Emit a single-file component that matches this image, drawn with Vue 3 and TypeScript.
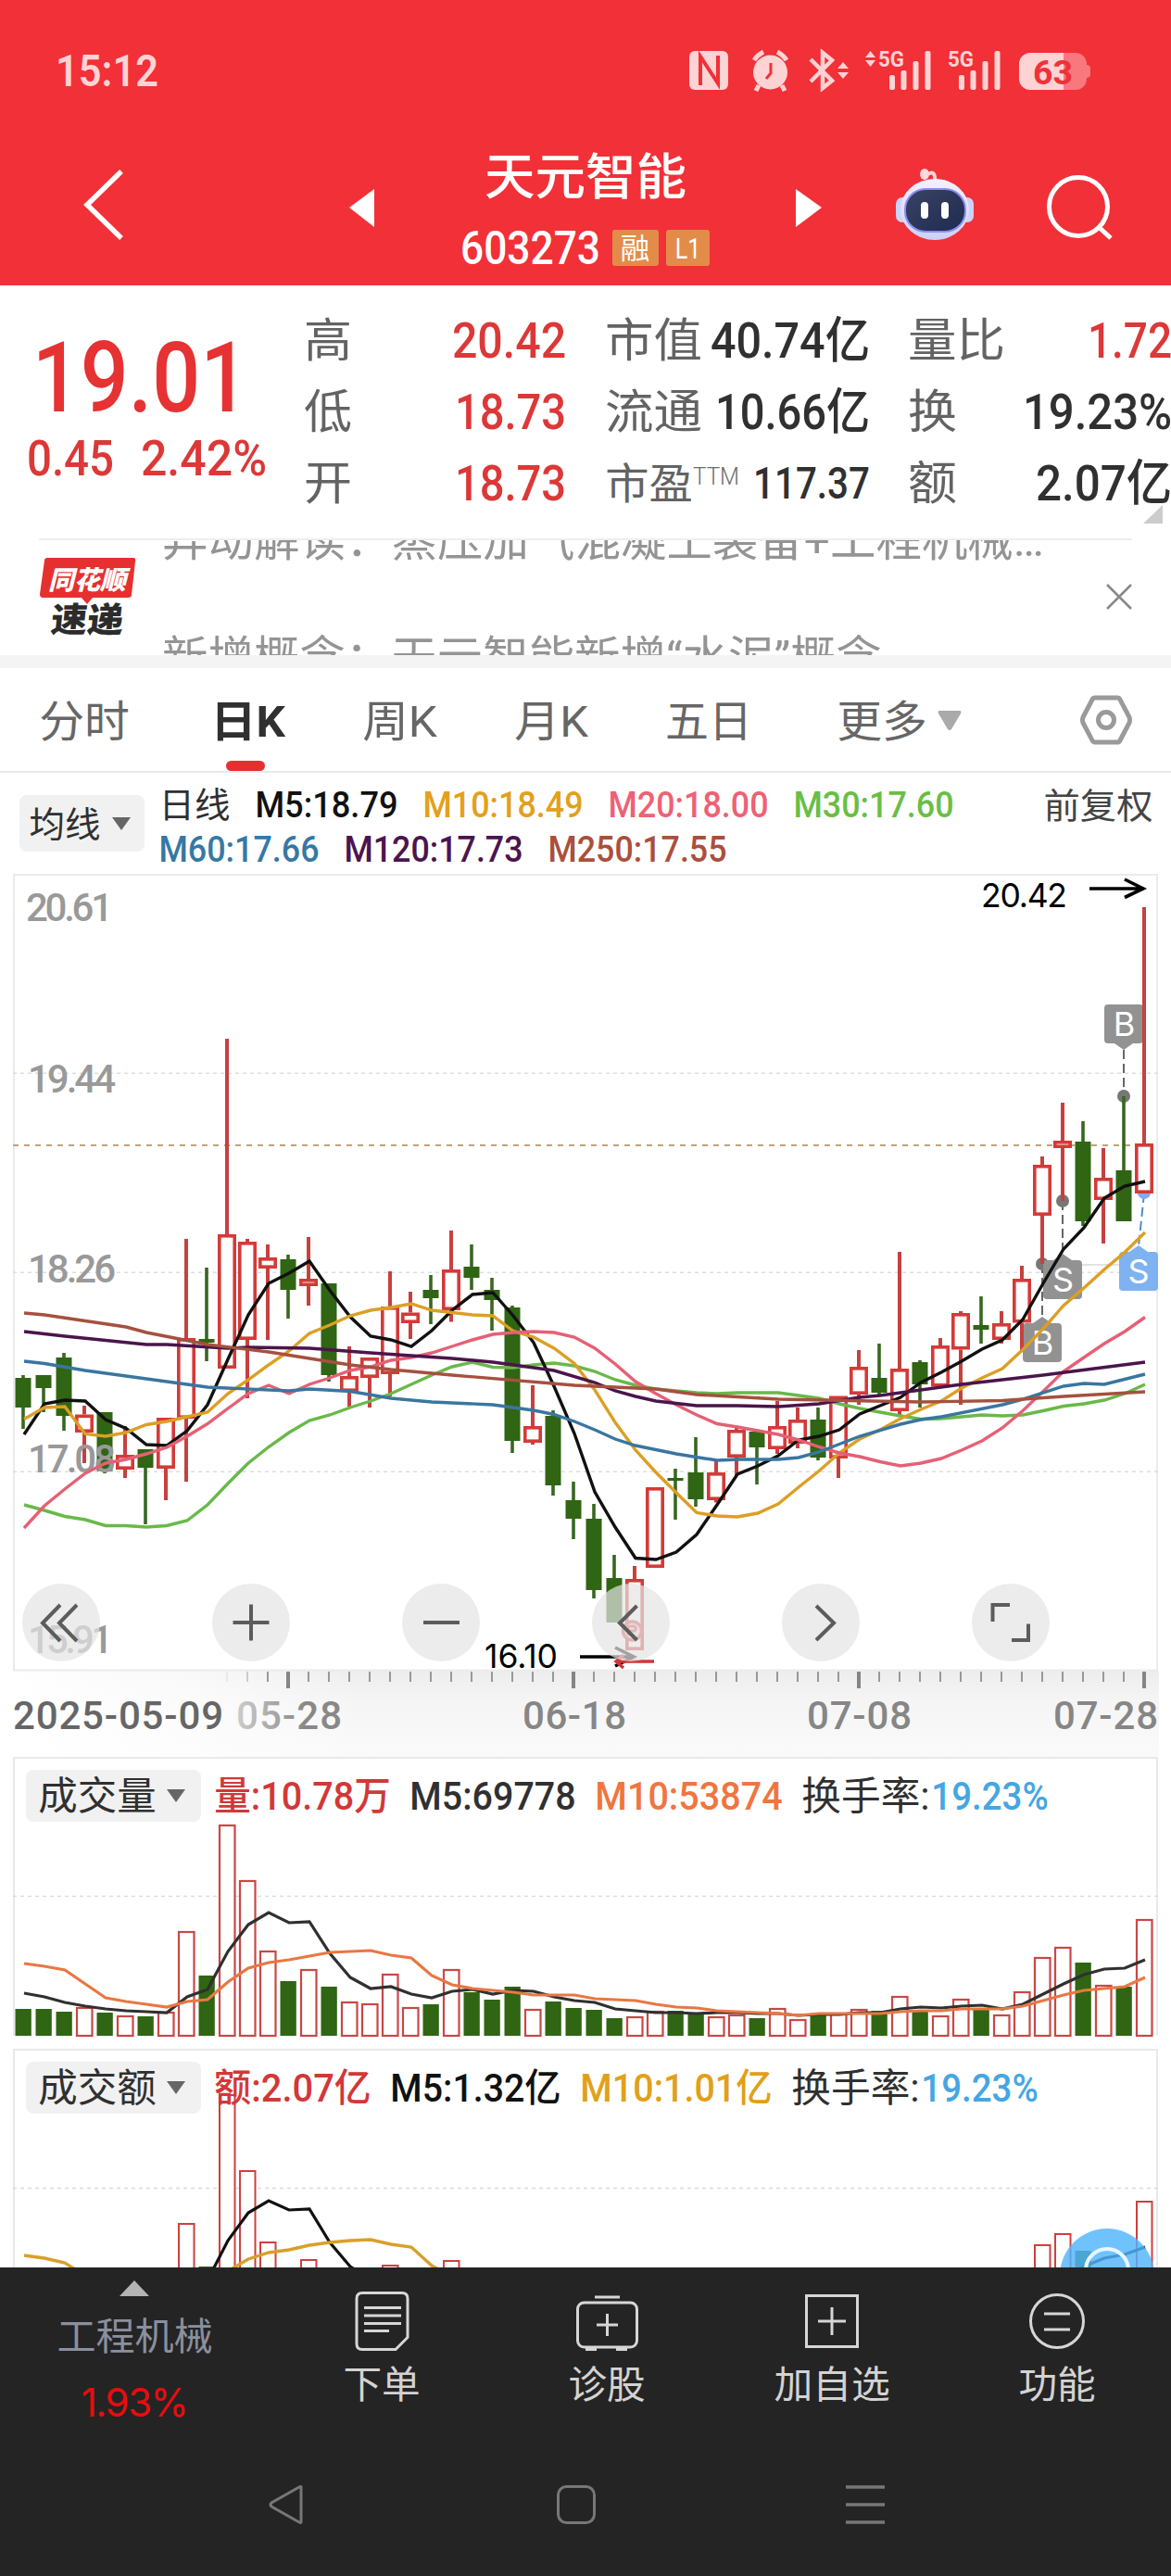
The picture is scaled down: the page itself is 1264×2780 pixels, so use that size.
<script setup lang="ts">
import { h } from 'vue'

const FONT = "Roboto, 'Noto Sans CJK SC', sans-serif"

interface FitProps {
  t: string
  w: number
  s: number
  c?: string
  b?: number
}

// One line of text condensed or widened to an exact ink width.
const Fit = (p: FitProps) =>
  h('svg', { width: p.w, height: p.s, style: 'overflow:visible;display:block;flex:none' }, [
    h(
      'text',
      {
        x: -p.s * 0.04,
        y: p.s * 0.86,
        'font-size': p.s,
        'font-family': FONT,
        'font-weight': p.b ?? 400,
        fill: p.c ?? '#333',
        textLength: p.w + p.s * 0.08,
        lengthAdjust: 'spacingAndGlyphs',
      },
      p.t,
    ),
  ])
Fit.props = ['t', 'w', 's', 'c', 'b']

interface Stat { label: string; lw: number; value: string; vw: number; up?: boolean; ttm?: boolean }
const stats: Stat[][] = [
  [
    { label: '高', lw: 48, value: '20.42', vw: 119, up: true },
    { label: '低', lw: 48, value: '18.73', vw: 116, up: true },
    { label: '开', lw: 48, value: '18.73', vw: 116, up: true },
  ],
  [
    { label: '市值', lw: 101, value: '40.74亿', vw: 168 },
    { label: '流通', lw: 101, value: '10.66亿', vw: 163 },
    { label: '市盈', lw: 91, value: '117.37', vw: 122, ttm: true },
  ],
  [
    { label: '量比', lw: 101, value: '1.72', vw: 87, up: true },
    { label: '换', lw: 49, value: '19.23%', vw: 157 },
    { label: '额', lw: 49, value: '2.07亿', vw: 143 },
  ],
]

const legend1 = [
  { t: 'M5:18.79', w: 151, c: '#111111' },
  { t: 'M10:18.49', w: 170, c: '#e3a01c' },
  { t: 'M20:18.00', w: 170, c: '#ee6175' },
  { t: 'M30:17.60', w: 170, c: '#69be45' },
]
const legend2 = [
  { t: 'M60:17.66', w: 170, c: '#3578a6' },
  { t: 'M120:17.73', w: 190, c: '#4c144f' },
  { t: 'M250:17.55', w: 190, c: '#ab4f3c' },
]

// direction, high, body top, body bottom, low
type Candle = [string, number, number, number, number]
const candles: Candle[] = [
  ['G', 1485, 1488, 1520, 1543], ['G', 1485, 1485, 1499, 1525], ['G', 1461, 1466, 1529, 1545],
  ['R', 1518, 1527.5, 1547, 1580], ['G', 1525, 1525, 1588.5, 1591], ['R', 1540, 1571, 1587, 1596],
  ['G', 1565, 1565, 1585, 1646], ['R', 1531, 1531, 1586, 1620], ['R', 1338, 1445, 1532, 1600],
  ['G', 1369, 1446, 1450, 1470], ['R', 1122, 1333, 1478, 1478], ['R', 1338, 1341, 1447, 1510],
  ['R', 1344, 1358, 1370, 1447], ['G', 1355, 1360, 1393, 1424], ['R', 1336, 1381, 1389, 1410],
  ['G', 1386, 1386, 1485, 1492], ['R', 1454, 1486, 1503, 1519], ['R', 1466, 1466, 1488, 1520],
  ['R', 1373, 1411, 1484, 1508], ['R', 1395, 1417.5, 1429, 1446], ['G', 1377, 1393, 1402, 1430],
  ['R', 1329, 1371, 1415, 1427.5], ['G', 1344, 1368, 1380, 1393], ['G', 1380, 1393, 1404, 1437],
  ['G', 1410, 1412, 1556, 1569], ['R', 1496, 1540, 1558, 1560], ['G', 1523, 1529, 1604, 1615],
  ['G', 1600, 1620, 1640, 1662], ['G', 1624, 1640, 1717, 1726], ['G', 1679, 1704, 1752, 1752],
  ['R', 1691, 1705, 1782, 1782], ['R', 1606, 1606, 1693, 1693], ['G', 1586, 1596, 1599, 1641],
  ['G', 1552, 1590, 1619, 1627], ['R', 1577, 1590, 1620, 1622.5], ['R', 1542, 1544, 1574, 1593],
  ['G', 1546, 1546, 1563, 1603], ['R', 1513, 1540, 1565, 1570], ['R', 1520, 1533, 1559, 1564],
  ['G', 1520, 1533, 1574, 1577], ['R', 1507.5, 1507.5, 1575, 1596], ['R', 1458, 1476, 1506, 1517],
  ['G', 1451, 1488, 1504, 1506], ['R', 1352, 1478, 1524, 1528], ['G', 1469, 1471, 1495, 1520],
  ['R', 1445, 1453, 1497.5, 1497.5], ['R', 1416, 1418, 1457.5, 1517], ['G', 1400, 1431, 1436, 1451],
  ['R', 1416, 1429, 1447, 1451], ['R', 1367, 1381, 1428.5, 1458.5], ['R', 1249, 1258, 1313, 1365],
  ['R', 1191, 1232, 1240, 1297], ['G', 1211, 1233, 1319, 1324], ['R', 1240, 1272, 1296, 1343],
  ['G', 1184, 1264, 1319, 1319], ['R', 980, 1235, 1289, 1289],
]
const cx = (i: number) => 25 + 22 * i

const full = (ys: number[]) => ys.map((y, i) => `${cx(i) + 1},${y}`).join(' ')
const sparse = (ps: [number, number][]) => ps.map(([i, y]) => `${cx(i) + 1},${y}`).join(' ')

const maLines = [
  { c: '#69b94a', p: full([1625, 1631, 1637.5, 1641, 1647.5, 1647.5, 1649, 1647.5, 1642, 1625, 1602, 1580, 1562.5, 1547, 1534, 1528, 1520, 1513, 1505, 1495, 1485, 1476, 1471, 1476.5, 1477, 1474, 1472, 1475, 1481, 1490, 1496, 1500, 1502, 1504, 1505, 1504, 1504, 1504, 1507, 1510, 1516, 1521, 1525, 1529, 1532.5, 1532, 1530, 1528, 1529, 1528, 1523.5, 1518.5, 1516, 1512, 1505, 1495]) },
  { c: '#111111', p: full([1549, 1516, 1512, 1513, 1533, 1542.5, 1560, 1561, 1545, 1517, 1468, 1420, 1386, 1375, 1362, 1393.5, 1422, 1443, 1447, 1454, 1437, 1415, 1398, 1396, 1421, 1450, 1497, 1548, 1611, 1649, 1682.5, 1684, 1676, 1657, 1625, 1592, 1583, 1572, 1555, 1551, 1544, 1527, 1518, 1509, 1493, 1482, 1470, 1457, 1447, 1425, 1386, 1349, 1326, 1294, 1281, 1276]) },
  { c: '#dc9f25', p: full([1532.5, 1520, 1519, 1548.5, 1551, 1547, 1538.5, 1535, 1530, 1525, 1505, 1490, 1474, 1459, 1440, 1431, 1421, 1415, 1412, 1408, 1415, 1417.5, 1420, 1421, 1437.5, 1444, 1456, 1472.5, 1501, 1536, 1566, 1590, 1612, 1633.5, 1637, 1638, 1634, 1624, 1606, 1588.5, 1569, 1554, 1544, 1532, 1522, 1513, 1499, 1488, 1478, 1457.5, 1435, 1410, 1391, 1371, 1352.5, 1331]) },
  { c: '#e66075', p: full([1650, 1626, 1608, 1591, 1580, 1576, 1570, 1563, 1551, 1537.5, 1521, 1505, 1496, 1505, 1495, 1488, 1480, 1476, 1469, 1466, 1461, 1454, 1447, 1441, 1439, 1438, 1439, 1444, 1456, 1473, 1492, 1505, 1517, 1528, 1537.5, 1541, 1545, 1549, 1555, 1562.5, 1569, 1573, 1578.5, 1583, 1580, 1575, 1566, 1556, 1542, 1523.5, 1502.5, 1481, 1466, 1451, 1438, 1422.5]) },
  { c: '#3976a0', p: sparse([[0, 1470], [1, 1472.5], [3, 1480], [5, 1486], [6, 1489], [8, 1495], [9, 1498], [13, 1502], [14, 1500], [16, 1502.5], [18, 1510], [20, 1514], [23, 1517], [25, 1523], [26, 1527.5], [27, 1535], [28, 1544], [29, 1554], [30, 1561], [32, 1570], [34, 1577], [35, 1576], [37, 1576], [38, 1574], [39, 1568], [41, 1551], [43, 1538], [44, 1533], [45, 1530], [48, 1517], [49, 1511], [51, 1497], [52, 1494], [53, 1495], [55, 1484]]) },
  { c: '#4a154b', p: sparse([[0, 1438], [2, 1443], [6, 1452], [7, 1452], [10, 1456], [11, 1455], [14, 1456], [17, 1461], [21, 1467], [23, 1471], [26, 1480], [28, 1493], [29, 1502], [30, 1508], [31, 1513], [33, 1518], [35, 1518], [37, 1519], [39, 1516], [41, 1509], [42, 1507], [46, 1495], [50, 1485], [55, 1471]]) },
  { c: '#a6503f', p: sparse([[0, 1418], [1, 1420], [5, 1433], [6, 1439], [9, 1452], [12, 1460], [16, 1474], [18, 1479], [21, 1485], [27, 1496], [31, 1500], [33, 1506], [37, 1511], [44, 1514], [48, 1512.5], [51, 1508], [55, 1503]]) },
]

const axisLabels = [
  { t: '20.61', x: 28, y: 995, w: 94 },
  { t: '19.44', x: 30, y: 1180, w: 95 },
  { t: '18.26', x: 30, y: 1385, w: 95 },
  { t: '17.08', x: 30, y: 1590, w: 95 },
  { t: '15.91', x: 30, y: 1785, w: 92 },
]

const ticks = Array.from({ length: 46 }, (_, k) => {
  const i = k + 10
  return { x: cx(i), major: i % 14 === 13, o: i === 10 ? 0.15 : i === 11 ? 0.45 : 1 }
})

const volTops = [2168, 2168, 2171, 2166, 2172, 2175, 2176, 2171, 2084, 2132, 1969, 2029, 2105, 2138, 2125, 2144, 2160, 2162, 2130, 2166, 2163, 2125, 2150, 2158, 2144, 2168, 2160, 2167, 2169, 2178, 2176, 2170, 2170, 2172, 2176, 2174, 2178, 2167, 2179, 2175, 2173, 2168, 2170, 2154, 2170, 2175, 2157, 2168, 2174, 2149, 2112, 2101, 2118, 2142, 2144, 2071]
const volM5 = full([2151, 2155, 2161, 2165, 2168, 2170, 2171, 2172, 2155, 2147, 2106, 2077, 2064, 2075, 2074, 2108, 2134, 2146, 2144, 2152, 2156, 2149, 2147, 2152, 2148, 2149, 2155, 2159, 2161, 2168, 2170, 2172, 2172, 2173, 2172, 2172, 2173, 2173, 2175, 2174, 2174, 2172, 2172, 2168, 2166, 2167, 2165, 2164, 2168, 2163, 2152, 2141, 2131, 2125, 2124, 2115])
const volM10 = full([2119, 2122, 2126, 2141, 2156, 2160, 2163, 2166, 2160, 2158, 2139, 2124, 2118, 2115, 2111, 2107, 2106, 2105, 2110, 2113, 2132, 2142, 2146, 2148, 2150, 2153, 2153, 2153, 2157, 2158, 2159, 2163, 2166, 2167, 2170, 2171, 2172, 2173, 2175, 2173, 2173, 2173, 2173, 2171, 2170, 2170, 2168, 2168, 2168, 2165, 2159, 2153, 2148, 2146, 2144, 2134])

const amtTops: [number, number][] = [[8, 2399], [9, 2446], [10, 2260], [11, 2342], [12, 2419], [14, 2438], [18, 2444], [21, 2439], [50, 2422], [51, 2410], [52, 2429], [55, 2375]]
const amtM5 = [
  sparse([[9, 2461], [10, 2418], [11, 2388], [12, 2375], [13, 2385], [14, 2384], [15, 2420], [16, 2446], [17, 2460]]),
  sparse([[51, 2456], [52, 2446], [53, 2437], [54, 2433], [55, 2425]]),
]
const amtM10 = [
  sparse([[0, 2434], [1, 2437], [2, 2442], [3, 2456]]),
  sparse([[10, 2451], [11, 2438], [12, 2431], [13, 2428], [14, 2423], [15, 2420], [16, 2418], [17, 2417], [18, 2422], [19, 2425], [20, 2445], [21, 2457]]),
]
const isRed = (i: number) => candles[i][0] === 'R'
</script>

<template>
  <div class="page">
    <div class="status">
      <Fit t="15:12" :w="107" :s="48" c="#fdd3d4" :b="600" />
      <svg class="status-icons" width="440" height="60" viewBox="740 46 440 60">
        <g fill="#fdd3d4">
          <rect x="744" y="55" width="42" height="42" rx="6" />
          <path d="M756 92V61l19 29V60" fill="none" stroke="#f13037" stroke-width="4" />
          <circle cx="831.500" cy="78" r="18.500" />
          <path d="M814 65a26 26 0 0 1 10-9M849 65a26 26 0 0 0-10-9M819 92l-3 6M844 92l3 6" fill="none" stroke="#fdd3d4" stroke-width="5" />
          <path d="M832 68v11l-5 6" fill="none" stroke="#f13037" stroke-width="3" />
          <path d="M875 64l23 23-10 8V57l10 8-23 23" fill="none" stroke="#fdd3d4" stroke-width="4.500" />
          <path d="M904 74l6-7 6 7zM904 78l6 7 6-7zM934 62l5.500-7 5.500 7zM934 65l5.500 7 5.500-7z" />
          <g v-for="o in [0, 75]" :key="o">
            <rect :x="960 + o" y="81" width="6" height="16" rx="2" />
            <rect :x="972.500 + o" y="76" width="6" height="21" rx="2" />
            <rect :x="985.500 + o" y="66" width="6" height="31" rx="2" />
            <rect :x="998.500 + o" y="55" width="6" height="42" rx="2" />
            <text :x="948 + o" y="72" font-size="24" font-weight="700" font-family="Roboto, sans-serif" textLength="28" lengthAdjust="spacingAndGlyphs">5G</text>
          </g>
          <path d="M1112 57h36v40h-36a12 12 0 0 1-12-12V69a12 12 0 0 1 12-12z" />
        </g>
        <path d="M1148 57h13a12 12 0 0 1 12 12v1a4 4 0 0 1 4 4v6a4 4 0 0 1-4 4v1a12 12 0 0 1-12 12h-13z" fill="#f8787d" />
        <text x="1115" y="91" font-size="36" font-weight="700" font-family="Roboto, sans-serif" fill="#ef3238" textLength="43" lengthAdjust="spacingAndGlyphs">63</text>
      </svg>
    </div>

    <header class="header">
      <svg width="300" height="156" viewBox="0 152 300 156">
        <path d="M131 185L94 221l37 36" fill="none" stroke="#fff" stroke-width="5.500" />
      </svg>
      <svg width="140" height="156" viewBox="300 152 140 156"><path d="M377 224l27-20v41z" fill="#fff" /></svg>
      <div class="title">
        <Fit t="天元智能" :w="214" :s="53" c="#fff" :b="500" />
        <div class="code">
          <Fit t="603273" :w="147" :s="50" c="#fff" :b="500" />
          <span class="badge b1"><Fit t="融" :w="29" :s="31" c="#fff" /></span>
          <span class="badge b2"><Fit t="L1" :w="25" :s="32" c="#fff" /></span>
        </div>
      </div>
      <svg width="106" height="156" viewBox="824 152 106 156"><path d="M887 224l-28-20v41z" fill="#fff" /></svg>
      <svg width="160" height="156" viewBox="930 152 160 156">
        <defs>
          <linearGradient id="face" x1="0" y1="0" x2="1" y2="1">
            <stop offset="0" stop-color="#3a4364" /><stop offset="1" stop-color="#1d2a50" />
          </linearGradient>
          <linearGradient id="shell" x1="0" y1="0" x2="0" y2="1">
            <stop offset="0" stop-color="#f4f1ff" /><stop offset="1" stop-color="#ccd0f6" />
          </linearGradient>
        </defs>
        <path d="M1009 196c1-10-3-11-7-8" fill="none" stroke="#ffd3d8" stroke-width="4" />
        <ellipse cx="998" cy="188" rx="5" ry="6" fill="#ffd9dd" />
        <rect x="967" y="213" width="14" height="27" rx="7" fill="#cdd2f7" />
        <rect x="1037" y="213" width="14" height="27" rx="7" fill="#cdd2f7" />
        <ellipse cx="1009" cy="226" rx="37" ry="33" fill="url(#shell)" />
        <rect x="977" y="204" width="65" height="46" rx="22" fill="url(#face)" stroke="#8d8bf2" stroke-width="2" />
        <rect x="994" y="218" width="8" height="18" rx="4" fill="#fff" />
        <rect x="1016" y="218" width="8" height="18" rx="4" fill="#fff" />
      </svg>
      <svg width="174" height="156" viewBox="1090 152 174 156">
        <g fill="none" stroke="#fff" stroke-width="5"><circle cx="1164" cy="223" r="31.500" /><path d="M1186 245l13 12" /></g>
      </svg>
    </header>

    <section class="quote">
      <div class="price">
        <Fit class="last" t="19.01" :w="225" :s="105" c="#e63232" :b="500" />
        <div class="change">
          <Fit t="0.45" :w="90" :s="53" c="#dc3838" :b="500" />
          <Fit t="2.42%" :w="132" :s="53" c="#dc3838" :b="500" />
        </div>
      </div>
      <div class="stats">
        <div v-for="(col, ci) in stats" :key="ci" class="col">
          <div v-for="s in col" :key="s.label" class="stat">
            <span class="lab">
              <Fit :t="s.label" :w="s.lw" :s="s.ttm ? 46 : 50" c="#636363" />
              <Fit v-if="s.ttm" class="ttm" t="TTM" :w="48" :s="25" c="#6c6c6c" :b="300" />
            </span>
            <Fit :t="s.value" :w="s.vw" :s="s.ttm ? 49 : 53" :c="s.up ? '#dc3838' : '#303030'" :b="500" />
          </div>
        </div>
      </div>
      <i class="corner"></i>
    </section>

    <section class="news">
      <svg class="logo" width="106" height="100" viewBox="42 595 106 100">
        <path d="M51 602h93q3 0 2 4l-4 36q0 3-4 3h-38l-6 7-6-7H46q-3 0-3-4l5-36q0-3 3-3z" fill="#e63030" />
        <g font-family="'Noto Sans CJK SC', sans-serif" font-weight="900">
          <text x="52" y="636" font-size="28" font-style="italic" fill="#fff" textLength="84" lengthAdjust="spacingAndGlyphs">同花顺</text>
          <text transform="translate(54 682) skewX(-6)" font-size="37" fill="#2c2c2c" textLength="78" lengthAdjust="spacingAndGlyphs">速递</text>
        </g>
      </svg>
      <div class="ticker">
        <Fit t="异动解读：蒸压加气混凝土装备+工程机械…" :w="948" :s="49" c="#949494" />
        <Fit t="新增概念：天元智能新增“水泥”概念" :w="773" :s="49" c="#949494" />
      </div>
      <svg class="close" width="28" height="28" viewBox="0 0 28 28"><path d="M1 1l26 26M27 1L1 27" stroke="#888" stroke-width="2.500" /></svg>
    </section>

    <nav class="tabs">
      <Fit t="分时" :w="94" :s="47" c="#666" />
      <span class="on"><Fit t="日K" :w="77" :s="47" c="#303030" :b="700" /></span>
      <Fit t="周K" :w="77" :s="47" c="#666" />
      <Fit t="月K" :w="76" :s="47" c="#666" />
      <Fit t="五日" :w="90" :s="47" c="#666" />
      <span class="more">
        <Fit t="更多" :w="94" :s="47" c="#666" />
        <svg width="26" height="22" viewBox="0 0 26 22"><path d="M2 0h22q2 0 1 3L15 20q-2 2-4 0L1 3q-1-3 1-3z" fill="#aaa" /></svg>
      </span>
      <svg class="hex" width="58" height="56" viewBox="1165 749 58 56">
        <path d="M1182 753h24q2 0 3 2l10 19q1 3 0 6l-10 19q-1 2-3 2h-24q-2 0-3-2l-10-19q-1-3 0-6l10-19q1-2 3-2z" fill="none" stroke="#9a9a9a" stroke-width="5" />
        <circle cx="1194" cy="777" r="8.500" fill="none" stroke="#9a9a9a" stroke-width="5" />
      </svg>
    </nav>

    <section class="legend">
      <div class="pill small"><Fit t="均线" :w="74" :s="38" c="#303030" /><i class="caret"></i></div>
      <div class="lines">
        <div class="lrow first">
          <Fit t="日线" :w="74" :s="38" c="#303030" />
          <Fit v-for="l in legend1" :key="l.t" :t="l.t" :w="l.w" :s="39.500" :c="l.c" :b="500" />
        </div>
        <div class="lrow">
          <Fit v-for="l in legend2" :key="l.t" :t="l.t" :w="l.w" :s="39.500" :c="l.c" :b="500" />
        </div>
      </div>
      <Fit class="fq" t="前复权" :w="115" :s="38" c="#444" />
    </section>

    <svg class="chart" width="1264" height="953" viewBox="0 944 1264 953">
      <defs>
        <linearGradient id="sh" x1="0" y1="0" x2="0" y2="1">
          <stop offset="0" stop-color="#ededed" /><stop offset=".35" stop-color="#f5f5f5" /><stop offset="1" stop-color="#fafafa" />
        </linearGradient>
        <linearGradient id="shl" x1="0" y1="0" x2="1" y2="0">
          <stop offset="0" stop-color="#fff" stop-opacity="1" /><stop offset=".5" stop-color="#fff" stop-opacity=".65" /><stop offset="1" stop-color="#fff" stop-opacity="0" />
        </linearGradient>
        <linearGradient id="fade" gradientUnits="userSpaceOnUse" x1="255" y1="0" x2="330" y2="0">
          <stop offset="0" stop-color="#ccc" /><stop offset="1" stop-color="#888" />
        </linearGradient>
      </defs>
      <rect x="14" y="1804" width="1237" height="93" fill="url(#sh)" />
      <rect x="14" y="1804" width="380" height="93" fill="url(#shl)" />
      <rect x="15" y="945" width="1234" height="858.500" fill="#fff" stroke="#ebebeb" stroke-width="2" />
      <g stroke="#dedede" stroke-width="1.500" stroke-dasharray="4 4">
        <path d="M14 1159.300H1250M14 1374.300H1250M14 1589.300H1250" />
      </g>
      <path d="M14 1237H1224" stroke="#c0a377" stroke-width="2" stroke-dasharray="6 6" />
      <path d="M1168 1366H1208" stroke="#e2e2e2" stroke-width="2" />

      <g fill="#fff" text-anchor="middle">
        <g stroke="#666" stroke-width="2" stroke-dasharray="10 5">
          <path d="M1213 1134V1184M1147 1297V1354M1125 1365V1424" />
        </g>
        <g fill="#777"><circle cx="1213" cy="1184" r="7" /><circle cx="1147" cy="1297" r="7" /><circle cx="1125" cy="1365" r="7" /></g>
        <path d="M1235 1289L1229 1346" stroke="#4a8edb" stroke-width="2" stroke-dasharray="10 5" />
        <circle cx="1235" cy="1288" r="7" fill="#86a9ee" />
        <g fill="#929292">
          <rect x="1192" y="1085" width="42" height="42" rx="4" /><path d="M1203 1127h20l-10 7z" />
          <rect x="1126" y="1361" width="42" height="42" rx="4" /><path d="M1137 1361h20l-10-7z" />
          <rect x="1104" y="1429" width="42" height="42" rx="4" /><path d="M1115 1429h20l-10-7z" />
        </g>
        <rect x="1208" y="1352" width="42" height="42" rx="4" fill="#7eb2f1" /><path d="M1219 1352h20l-10-7z" fill="#7eb2f1" />
        <g font-family="Inter, sans-serif" font-size="36">
          <text x="1213.500" y="1119">B</text><text x="1147.500" y="1395">S</text><text x="1125.500" y="1463">B</text><text x="1229" y="1386">S</text>
        </g>
      </g>

      <g v-for="(k, i) in candles" :key="i">
        <template v-if="k[0] === 'R'">
          <path :d="`M${cx(i)} ${k[1]}V${k[2]}M${cx(i)} ${k[3]}V${k[4]}`" stroke="#c54140" stroke-width="4" />
          <rect :x="cx(i) - 8.200" :y="k[2] + 1.800" width="16.400" :height="Math.max(k[3] - k[2] - 3.600, 1)" fill="#fff" stroke="#d43a38" stroke-width="3.600" />
        </template>
        <template v-else>
          <path :d="`M${cx(i)} ${k[1]}V${k[4]}`" stroke="#366820" stroke-width="3.600" />
          <rect :x="cx(i) - 8.500" :y="k[2]" width="17" :height="k[3] - k[2]" fill="#306513" />
        </template>
      </g>
      <circle cx="682.500" cy="1761" r="10" fill="#f7dada" stroke="#d64747" stroke-width="3.500" />
      <path d="M678 1766v-10h7q3 3 0 5h-7" fill="none" stroke="#d64747" stroke-width="3" />

      <g font-family="Roboto, sans-serif" font-size="42" font-weight="500" fill="#999">
        <text v-for="a in axisLabels" :key="a.t" :x="a.x" :y="a.y" :textLength="a.w">{{ a.t }}</text>
      </g>

      <polyline v-for="(l, i) in maLines" :key="i" :points="l.p" fill="none" :stroke="l.c" stroke-width="3.400" />

      <g font-family="Inter, sans-serif" font-size="35.500" fill="#000">
        <text x="1059" y="980" textLength="93">20.42</text>
        <text x="523" y="1801" textLength="79">16.10</text>
      </g>
      <g fill="none" stroke="#000" stroke-width="3.600">
        <path d="M1176 960h59M1214 950l20 10-20 9.500" />
        <path d="M626 1789h59M664 1779l20 10-20 10" />
      </g>
      <path d="M706 1794h-41M673 1787l-8 7 8 7" fill="none" stroke="#d43436" stroke-width="3.500" />

      <circle v-for="n in 6" :key="n" :cx="66 + (n - 1) * 205" cy="1752" r="42" fill="rgba(228,228,228,.71)" />
      <g fill="none" stroke="#5c5c5c" stroke-width="4">
        <path d="M65 1733L46 1752.500l19 19.500M83 1733l-19 19.500L83 1772" />
        <path d="M251.500 1752h39M271 1732.500v39M457 1752h39" />
        <path d="M687.500 1734L669 1752.500l18.500 18.500M881 1734l19 18.500L881 1771" />
        <path d="M1071.500 1751v-18H1090M1110 1753.500V1771h-18" />
      </g>

      <rect v-for="k in ticks" :key="k.x" :x="k.major ? k.x - 2 : k.x - 1" y="1805" :width="k.major ? 4 : 2" :height="k.major ? 18 : 11" :fill="k.major ? '#858585' : '#999'" :opacity="k.o" />
      <g font-family="Roboto, sans-serif" font-size="42" font-weight="500" fill="#868686">
        <text x="14" y="1867" textLength="227" fill="#666">2025-05-09</text>
        <text x="255" y="1867" textLength="114" fill="url(#fade)">05-28</text>
        <text x="564" y="1867" textLength="112">06-18</text>
        <text x="871" y="1867" textLength="113">07-08</text>
        <text x="1137" y="1867" textLength="113">07-28</text>
      </g>
    </svg>

    <section class="panel vol">
      <svg class="plot" width="1264" height="315" viewBox="0 1896 1264 315">
        <path d="M15 2197V1897H1249V2197" fill="none" stroke="#e9e9e9" stroke-width="2" />
        <path d="M14 2046.300H1250" stroke="#dadada" stroke-width="1.300" stroke-dasharray="4 4" />
        <template v-for="(y, i) in volTops" :key="i">
          <rect v-if="isRed(i)" :x="cx(i) - 8" :y="y + 1" width="16.500" :height="2196 - y" fill="#fff" stroke="#c94746" stroke-width="2.200" />
          <rect v-else :x="cx(i) - 8.500" :y="y" width="17.300" :height="2197 - y" fill="#306513" />
        </template>
        <polyline :points="volM5" fill="none" stroke="#303030" stroke-width="3.200" />
        <polyline :points="volM10" fill="none" stroke="#e97743" stroke-width="3.200" />
      </svg>
      <div class="info">
        <div class="pill"><Fit t="成交量" :w="124" :s="42" c="#303030" /><i class="caret"></i></div>
        <Fit class="a" t="量:10.78万" :w="187" :s="42" c="#d23838" :b="500" />
        <Fit class="b" t="M5:69778" :w="176" :s="42" c="#303030" :b="500" />
        <Fit class="b" t="M10:53874" :w="199" :s="42" c="#f07540" :b="500" />
        <Fit class="b" t="换手率:" :w="135" :s="42" c="#303030" />
        <Fit class="c" t="19.23%" :w="123" :s="42" c="#45a6e2" :b="500" />
      </div>
    </section>

    <section class="panel amt">
      <svg class="plot" width="1264" height="236" viewBox="0 2211 1264 236">
        <path d="M15 2460V2212H1249V2460" fill="none" stroke="#e9e9e9" stroke-width="2" />
        <path d="M14 2361.500H1250" stroke="#dadada" stroke-width="1.300" stroke-dasharray="4 4" />
        <template v-for="[i, y] in amtTops" :key="i">
          <rect v-if="isRed(i)" :x="cx(i) - 8" :y="y + 1" width="16.500" height="260" fill="#fff" stroke="#cd403f" stroke-width="2" />
          <rect v-else :x="cx(i) - 8.500" :y="y" width="17.300" height="80" fill="#306513" />
        </template>
        <polyline v-for="p in amtM5" :key="p" :points="p" fill="none" stroke="#111" stroke-width="3.200" />
        <polyline v-for="p in amtM10" :key="p" :points="p" fill="none" stroke="#d8a02a" stroke-width="3.400" />
        <circle cx="1195" cy="2456" r="51" fill="#50b5fc" fill-opacity=".82" />
        <circle cx="1195" cy="2450" r="23" fill="none" stroke="#e8f6ff" stroke-width="4" />
      </svg>
      <div class="info">
        <div class="pill"><Fit t="成交额" :w="124" :s="42" c="#303030" /><i class="caret"></i></div>
        <Fit class="a" t="额:2.07亿" :w="166" :s="42" c="#d23838" :b="500" />
        <Fit class="b" t="M5:1.32亿" :w="181" :s="42" c="#111" :b="500" />
        <Fit class="b" t="M10:1.01亿" :w="204" :s="42" c="#e2a018" :b="500" />
        <Fit class="b" t="换手率:" :w="135" :s="42" c="#303030" />
        <Fit class="c" t="19.23%" :w="123" :s="42" c="#45a6e2" :b="500" />
      </div>
    </section>

    <footer class="bottom">
      <div class="actions">
        <div class="sector">
          <svg width="34" height="18" viewBox="0 0 34 18"><path d="M17 0l16 17H1z" fill="#b4b4b4" /></svg>
          <Fit t="工程机械" :w="165" :s="41" c="#8b8f9e" />
          <span class="pct">1.93%</span>
        </div>
        <div class="act">
          <svg width="80" height="70" viewBox="372 2470 80 70" fill="none" stroke="#d6d6d6" stroke-width="3">
            <path d="M391 2474.500h43q6 0 6 6v42l-13 13h-36q-6 0-6-6v-49q0-6 6-6z" />
            <path d="M393 2490.500h40M393 2499h40M393 2507.500h40M393 2515.500h27" />
          </svg>
          <Fit t="下单" :w="80" :s="41" c="#d3d3d3" />
        </div>
        <div class="act">
          <svg width="80" height="70" viewBox="615 2470 80 70" fill="none" stroke="#d6d6d6" stroke-width="3">
            <rect x="623.500" y="2485" width="64" height="48" rx="7" />
            <path d="M642 2479h27M655.500 2497v24M644 2509h23M632 2535.500h12M665 2535.500h12" />
          </svg>
          <Fit t="诊股" :w="80" :s="41" c="#d3d3d3" />
        </div>
        <div class="act">
          <svg width="80" height="70" viewBox="858 2470 80 70" fill="none" stroke="#d6d6d6" stroke-width="3">
            <rect x="870.500" y="2477.500" width="55" height="55" />
            <path d="M898 2490v30M883 2505h30" />
          </svg>
          <Fit t="加自选" :w="122" :s="41" c="#d3d3d3" />
        </div>
        <div class="act">
          <svg width="80" height="70" viewBox="1101 2470 80 70" fill="none" stroke="#d6d6d6" stroke-width="3">
            <circle cx="1141" cy="2505" r="28.500" />
            <path d="M1127 2497h28M1127 2514h28" />
          </svg>
          <Fit t="功能" :w="80" :s="41" c="#d3d3d3" />
        </div>
      </div>
      <div class="sys">
        <svg width="44" height="44" viewBox="0 0 44 44"><path d="M37 3v38q0 1-2 0L5 24q-2-2 0-4L35 3q2-1 2 0z" fill="none" stroke="#777" stroke-width="3" /></svg>
        <svg width="44" height="44" viewBox="0 0 44 44"><rect x="2.500" y="2.500" width="39" height="39" rx="9" fill="none" stroke="#777" stroke-width="3" /></svg>
        <svg width="44" height="44" viewBox="0 0 44 44"><path d="M1 3h42M1 22h42M1 41h42" stroke="#777" stroke-width="3.500" /></svg>
      </div>
    </footer>
  </div>
</template>

<style>
body { margin: 0; }
</style>

<style scoped>
.page { width: 1264px; height: 2780px; background: #fff; overflow: hidden; font-family: Roboto, "Noto Sans CJK SC", sans-serif; }
.page svg { display: block; flex: none; }
.status { height: 152px; box-sizing: border-box; background: #f23037; display: flex; align-items: center; justify-content: space-between; padding: 0 84px 0 62px; }
.header { height: 156px; background: #f23037; display: flex; }
.title { width: 384px; padding-top: 12px; display: flex; flex-direction: column; align-items: center; }
.code { display: flex; align-items: center; margin-top: 25px; }
.badge { height: 39px; border-radius: 3px; background: #e38c4a; display: flex; align-items: center; justify-content: center; }
.b1 { width: 50px; margin-left: 15px; }
.b2 { width: 47px; margin-left: 8px; }
.quote { height: 273px; display: flex; position: relative; }
.price { width: 330px; padding-top: 46px; }
.last { margin-left: 39px; }
.change { display: flex; gap: 33px; margin: 8px 0 0 31px; }
.stats { display: flex; padding-top: 20px; }
.col { width: 279px; margin-right: 46px; }
.col:nth-child(2) { width: 282px; margin-right: 45px; }
.col:nth-child(3) { width: 281px; margin-right: 0; }
.stat { height: 77px; display: flex; align-items: center; justify-content: space-between; }
.lab { display: flex; align-items: flex-start; gap: 3px; }
.ttm { margin-top: 3px; }
.corner { position: absolute; right: 9px; top: 237px; border-left: 21px solid transparent; border-bottom: 20px solid #ccc; }
.news { height: 126px; margin: 0 42px; border-top: 2px solid #eee; box-sizing: border-box; display: flex; overflow: hidden; }
.logo { margin-top: 12px; }
.ticker { margin: -25px 0 0 29px; width: 1018px; display: flex; flex-direction: column; gap: 78px; }
.close { margin-top: 47px; margin-left: -1px; }
.tabs { height: 127px; border-top: 14px solid #f4f4f4; border-bottom: 2px solid #e9e9e9; box-sizing: border-box; display: flex; align-items: center; padding: 3px 41px 0 44px; }
.tabs > * + * { margin-left: 87px; }
.tabs > .on { margin-left: 91px; height: 108px; display: flex; align-items: center; position: relative; }
.on::after { content: ""; position: absolute; left: 15px; bottom: 0; width: 42px; height: 11px; border-radius: 6px; background: #e63030; }
.tabs > .more { margin-left: 95px; display: flex; align-items: center; gap: 13px; }
.tabs > .hex { margin: 0 0 3px auto; }
.legend { height: 110px; display: flex; }
.pill { width: 189px; height: 56px; border-radius: 8px; background: #f1f1f1; display: flex; align-items: center; justify-content: space-between; padding: 0 17px 0 15px; box-sizing: border-box; flex: none; }
.pill.small { width: 135px; height: 61px; margin: 24px 0 0 21px; padding: 0 15px 0 12px; }
.caret { border: 10.5px solid transparent; border-top: 14px solid #666; border-bottom: 0; }
.lines { margin: 14px 0 0 17px; width: 870px; }
.lrow { display: flex; gap: 30px; align-items: center; height: 40px; }
.lrow.first { margin-bottom: 8px; }
.fq { margin: 16px 0 0 85px; }
.chart { margin-top: -1px; }
.vol { height: 315px; }
.amt { height: 236px; overflow: hidden; }
.panel { display: grid; }
.panel > * { grid-area: 1 / 1; }
.info { z-index: 1; align-self: start; display: flex; align-items: center; margin: 14px 0 0 28px; }
.a { margin-left: 16px; }
.b { margin-left: 24px; }
.c { margin-left: 5px; }
.bottom { height: 333px; background: #242424; }
.actions { display: flex; height: 180px; }
.sector { width: 290px; display: flex; flex-direction: column; align-items: center; padding-top: 14px; }
.sector > svg:nth-child(2) { margin-top: 22px; }
.pct { font: 400 42px/50px Inter, sans-serif; color: #e80d0d; margin-top: 26px; letter-spacing: -1.5px; }
.act { width: 243px; display: flex; flex-direction: column; align-items: center; padding-top: 23px; gap: 13px; }
.sys { display: flex; gap: 268px; margin-left: 288px; padding-top: 54px; }
</style>
